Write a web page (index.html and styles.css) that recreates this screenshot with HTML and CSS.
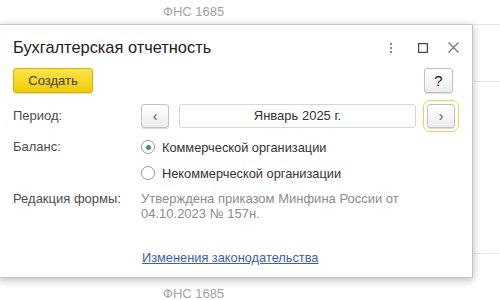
FILE: index.html
```html
<!DOCTYPE html>
<html lang="ru">
<head>
    <meta charset="UTF-8">
    <title>Бухгалтерская отчетность</title>
    <link rel="stylesheet" href="styles.css">
</head>
<body>

    <!-- List behind the dialog -->
    <div class="list">
        <div class="list-row row-top"><span>ФНС 1685</span></div>
        <div class="list-row row-mid"></div>
        <div class="list-row row-big"></div>
        <div class="list-row row-bottom"><span>ФНС 1685</span></div>
    </div>

    <!-- Dialog -->
    <div class="dialog">
        <div class="dialog-header">
            <h1 class="dialog-title">Бухгалтерская отчетность</h1>
            <div class="header-icons">
                <svg class="icon-more" width="6" height="12" viewBox="0 0 6 12">
                    <circle cx="3" cy="2" r="1.2" fill="#8a8a8a"/>
                    <circle cx="3" cy="6" r="1.2" fill="#8a8a8a"/>
                    <circle cx="3" cy="10" r="1.2" fill="#8a8a8a"/>
                </svg>
                <svg class="icon-max" width="10" height="10" viewBox="0 0 10 10">
                    <rect x="0.6" y="0.6" width="8.8" height="8.8" fill="none" stroke="#444" stroke-width="1.2"/>
                </svg>
                <svg class="icon-close" width="11" height="11" viewBox="0 0 11 11">
                    <path d="M0.5 0.5 L10.5 10.5 M10.5 0.5 L0.5 10.5" stroke="#777" stroke-width="1.3"/>
                </svg>
            </div>
        </div>

        <div class="toolbar">
            <button class="btn btn-main">Создать</button>
            <button class="btn btn-help">?</button>
        </div>

        <div class="form">
            <div class="form-label period-label">Период:</div>
            <div class="period">
                <button class="btn btn-arrow">&lsaquo;</button>
                <div class="period-input">Январь 2025 г.</div>
                <button class="btn btn-arrow focused">&rsaquo;</button>
            </div>

            <div class="form-label radio-label">Баланс:</div>
            <div class="radios">
                <div class="radio-item"><span class="radio checked"></span>Коммерческой организации</div>
                <div class="radio-item"><span class="radio"></span>Некоммерческой организации</div>
            </div>

            <div class="form-label note-label">Редакция формы:</div>
            <div class="note">Утверждена приказом Минфина России от<br>04.10.2023 № 157н.</div>
        </div>

        <div class="footer">
            <a href="#" class="link">Изменения законодательства</a>
        </div>
    </div>

</body>
</html>
```

FILE: styles.css
```css
body {
    margin: 0;
    font-family: Arial, "Liberation Sans", sans-serif;
    background: #fff;
    overflow: hidden;
    width: 500px;
    height: 300px;
    position: relative;
}

/* Background list */
.list-row {
    border-bottom: 1px solid #e6e6e6;
    box-sizing: border-box;
    font-size: 13px;
    color: #a3a3a3;
    padding-left: 163px;
}

.row-top {
    height: 25px;
    padding-top: 4px;
}

.row-mid {
    height: 57px;
}

.row-big {
    height: 172px;
}

.row-bottom {
    border-bottom: none;
    padding-top: 32px;
}

/* Dialog */
.dialog {
    position: absolute;
    left: -1px;
    top: 24px;
    width: 474px;
    height: 254px;
    background: #fff;
    border: 1px solid #c4c4c4;
    box-shadow: 0 2px 8px rgba(0, 0, 0, 0.28);
    padding: 0 19px 0 13px;
    box-sizing: border-box;
    color: #4d4d4d;
    font-size: 13px;
}

.dialog-header {
    display: flex;
    align-items: center;
    justify-content: space-between;
    height: 42px;
    padding-top: 1px;
}

.dialog-title {
    margin: 0;
    font-size: 16.4px;
    font-weight: normal;
    color: #222;
}

.header-icons {
    display: flex;
    align-items: center;
    margin-right: -6px;
    margin-top: 1px;
}

.icon-max {
    margin-left: 24px;
}

.icon-close {
    margin-left: 20px;
}

.toolbar {
    display: flex;
    justify-content: space-between;
}

.btn {
    font-family: inherit;
    font-size: 13px;
    color: #333;
    border: 1px solid #c2c2c2;
    border-radius: 3px;
    background: linear-gradient(#ffffff, #ececec);
    box-shadow: 0 1px 1px rgba(0, 0, 0, 0.15);
    padding: 0;
    cursor: pointer;
}

.btn-main {
    width: 80px;
    height: 25px;
    background: linear-gradient(#fbe44a, #f1cc00);
    border-color: #d4b200;
    color: #3c3c3c;
}

.btn-help {
    width: 29px;
    height: 25px;
    font-size: 15px;
    color: #222;
}

/* Form grid */
.form {
    display: grid;
    grid-template-columns: 128px 1fr;
    margin-top: 11px;
}

.form-label {
    color: #4d4d4d;
}

.period-label {
    line-height: 24px;
}

.period {
    display: flex;
    align-items: center;
    gap: 10px;
    height: 24px;
}

.btn-arrow {
    width: 28px;
    height: 24px;
    font-size: 14px;
    line-height: 20px;
    color: #555;
    flex-shrink: 0;
}

.btn-arrow.focused {
    margin-left: 1px;
    outline: 1px solid #f3d43f;
    outline-offset: 3px;
}

.period-input {
    width: 237px;
    height: 24px;
    box-sizing: border-box;
    border: 1px solid #d6d6d6;
    border-radius: 3px;
    text-align: center;
    line-height: 22px;
    color: #333;
}

.radio-label {
    margin-top: 9px;
    line-height: 20px;
}

.radios {
    margin-top: 9px;
    display: flex;
    flex-direction: column;
    gap: 6px;
}

.radio-item {
    display: flex;
    align-items: center;
    height: 20px;
    color: #333;
    font-size: 12.8px;
}

.radio {
    width: 12px;
    height: 12px;
    border: 1px solid #9a9a9a;
    border-radius: 50%;
    margin-right: 7px;
    position: relative;
    background: #fff;
}

.radio.checked::after {
    content: "";
    position: absolute;
    left: 3.5px;
    top: 3.5px;
    width: 5px;
    height: 5px;
    border-radius: 50%;
    background: #3a9d4c;
}

.note-label {
    margin-top: 8px;
    line-height: 15px;
}

.note {
    margin-top: 8px;
    line-height: 15px;
    color: #8c8c8c;
}

.footer {
    margin-top: 29px;
    padding-left: 129px;
}

.link {
    color: #3c61ad;
    text-decoration: underline;
    font-size: 12.8px;
}
```
